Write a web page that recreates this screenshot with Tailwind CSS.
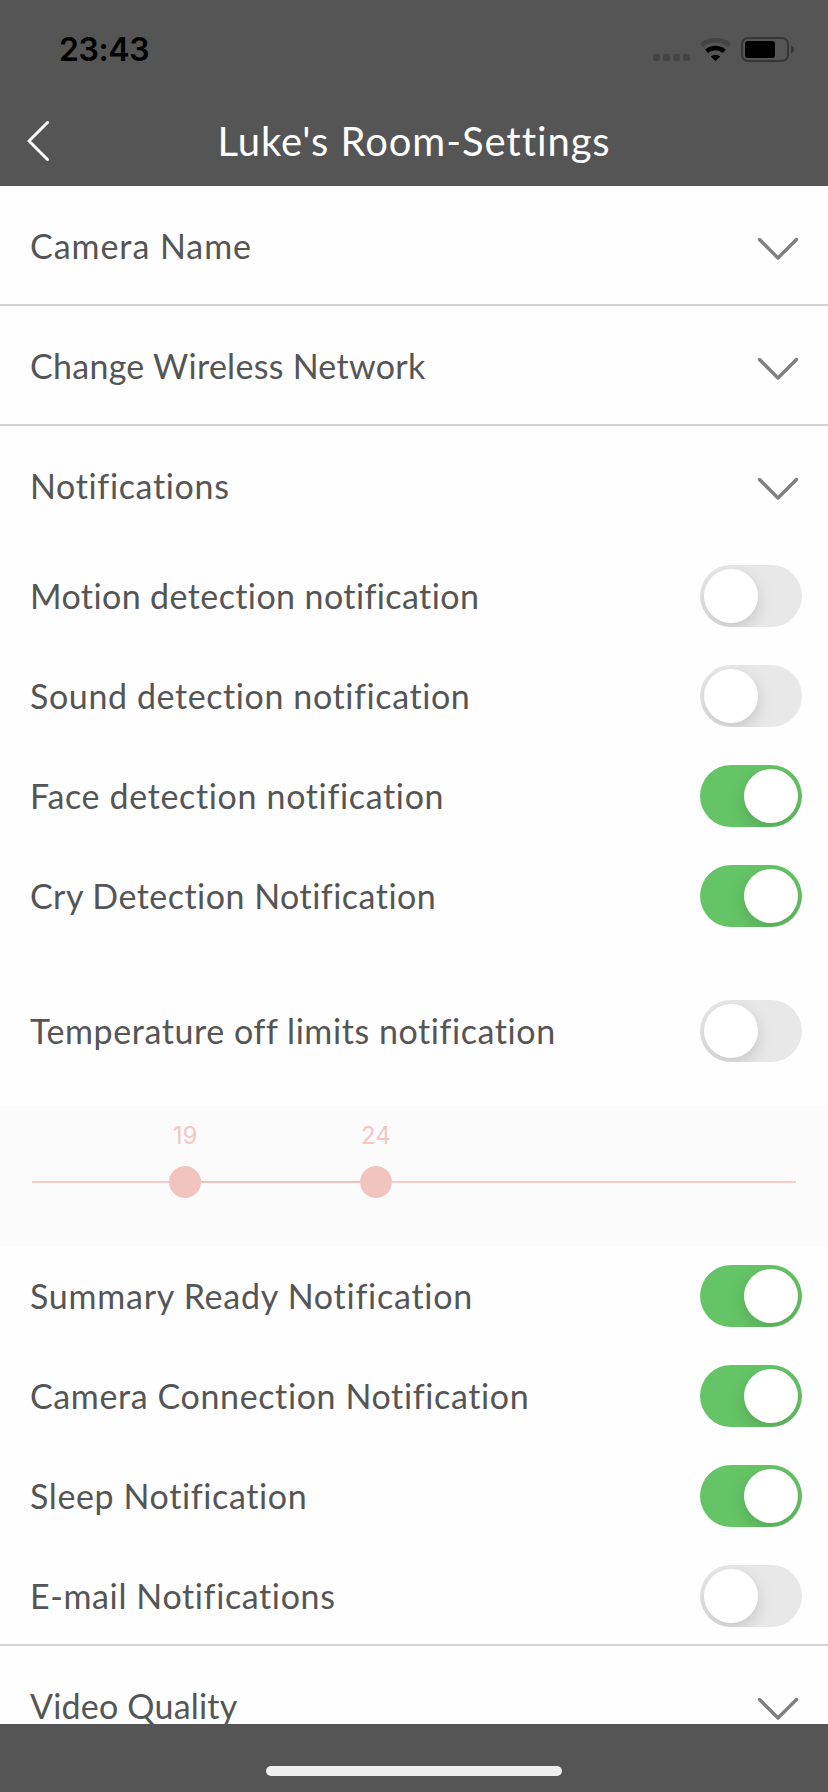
<!DOCTYPE html>
<html lang="en">

<head>
    <meta charset="UTF-8" />
    <meta name="viewport" content="width=device-width, initial-scale=1.0" />
    <title>Luke's Room-Settings</title>
    <script src="https://cdn.jsdelivr.net/npm/@tailwindcss/browser@4"></script>
</head>

<body class="bg-[#fefefe] h-[1792px] overflow-hidden flex flex-col font-['Lato',sans-serif] text-[34px] leading-[40px] text-[#555555]">

    <!-- Status bar + title -->
    <header class="bg-[#555555] h-[186px] shrink-0">
        <div class="h-[98px] flex items-center justify-between pl-[59px] pr-[33px]">
            <span class="font-['Inter',sans-serif] font-semibold text-[32px] text-black tracking-[-0.4px] pt-[2px]">23:43</span>
            <svg class="w-[142px] h-[26px] mt-[1px]" viewBox="0 0 142 26" fill="none">
                <g fill="#444444">
                    <rect x="0" y="17" width="7" height="7" rx="2" />
                    <rect x="10" y="17" width="7" height="7" rx="2" />
                    <rect x="20" y="17" width="7" height="7" rx="2" />
                    <rect x="30" y="17" width="7" height="7" rx="2" />
                </g>
                <path d="M48.400 8.200a22.600 22.600 0 0 1 28.200 0" stroke="#444444" stroke-width="4.6" />
                <path d="M53.600 14.200a14.200 14.200 0 0 1 17.800 0" stroke="black" stroke-width="4.6" />
                <path d="M62.500 24l-4.700-4.600a7.200 7.200 0 0 1 9.400 0z" fill="black" />
                <rect x="89" y="1" width="46" height="23" rx="6" stroke="#363636" stroke-width="2" />
                <rect x="92" y="4" width="30" height="17" rx="3" fill="black" />
                <path d="M138 8.500c4 1.500 4 6.500 0 8z" fill="#363636" />
            </svg>
        </div>
        <div class="h-[88px] grid grid-cols-[100px_1fr_100px] items-center text-white">
            <svg class="w-[22px] h-[40px] ml-[27px] -mt-[2px]" viewBox="0 0 22 40" fill="none" stroke="white" stroke-width="3" stroke-linecap="round" stroke-linejoin="round">
                <path d="M20.500 1.500L2 20l18.500 18.500" />
            </svg>
            <h1 class="text-[40px] leading-[48px] text-center whitespace-nowrap tracking-[0.92px] -mt-[3px]">Luke's Room-Settings</h1>
        </div>
    </header>

    <main class="flex-1 min-h-0 overflow-hidden">
        <section class="h-[120px] flex items-center justify-between pl-[30px] pr-[29px] border-b-2 border-[#d4d4d4]">
            <span class="tracking-[0.95px] pt-[2px]">Camera Name</span>
            <svg class="w-[42px] h-[24px] mt-[7px]" viewBox="0 0 42 24" fill="none" stroke="#808080" stroke-width="3.4" stroke-linecap="round" stroke-linejoin="round">
                <path d="M2.500 2.500L21 21 39.500 2.500" />
            </svg>
        </section>
        <section class="h-[120px] flex items-center justify-between pl-[30px] pr-[29px] border-b-2 border-[#d4d4d4]">
            <span class="tracking-[0.28px] pt-[2px]">Change Wireless Network</span>
            <svg class="w-[42px] h-[24px] mt-[7px]" viewBox="0 0 42 24" fill="none" stroke="#808080" stroke-width="3.4" stroke-linecap="round" stroke-linejoin="round">
                <path d="M2.500 2.500L21 21 39.500 2.500" />
            </svg>
        </section>

        <section class="h-[1220px] border-b-2 border-[#d4d4d4]">
            <div class="h-[118px] flex items-center justify-between pl-[30px] pr-[29px] mb-[2px]">
                <span class="tracking-[0.65px] pt-[2px]">Notifications</span>
                <svg class="w-[42px] h-[24px] mt-[7px]" viewBox="0 0 42 24" fill="none" stroke="#808080" stroke-width="3.4" stroke-linecap="round" stroke-linejoin="round">
                    <path d="M2.500 2.500L21 21 39.500 2.500" />
                </svg>
            </div>

            <div class="h-[100px] flex items-center justify-between pl-[30px] pr-[26px]">
                <span class="tracking-[0.4px]">Motion detection notification</span>
                <div class="w-[102px] h-[62px] rounded-full bg-[#e8e8e8] p-1 overflow-hidden flex">
                    <div class="size-[54px] rounded-full bg-white shadow-[0_6px_16px_rgba(0,0,0,0.15)]"></div>
                </div>
            </div>
            <div class="h-[100px] flex items-center justify-between pl-[30px] pr-[26px]">
                <span class="tracking-[0.6px]">Sound detection notification</span>
                <div class="w-[102px] h-[62px] rounded-full bg-[#e8e8e8] p-1 overflow-hidden flex">
                    <div class="size-[54px] rounded-full bg-white shadow-[0_6px_16px_rgba(0,0,0,0.15)]"></div>
                </div>
            </div>
            <div class="h-[100px] flex items-center justify-between pl-[30px] pr-[26px]">
                <span class="tracking-[0.65px]">Face detection notification</span>
                <div class="w-[102px] h-[62px] rounded-full bg-[#65c466] p-1 overflow-hidden flex justify-end">
                    <div class="size-[54px] rounded-full bg-white shadow-[0_6px_16px_rgba(0,0,0,0.15)]"></div>
                </div>
            </div>
            <div class="h-[100px] flex items-center justify-between pl-[30px] pr-[26px]">
                <span class="tracking-[0.48px]">Cry Detection Notification</span>
                <div class="w-[102px] h-[62px] rounded-full bg-[#65c466] p-1 overflow-hidden flex justify-end">
                    <div class="size-[54px] rounded-full bg-white shadow-[0_6px_16px_rgba(0,0,0,0.15)]"></div>
                </div>
            </div>

            <div class="h-[100px] mt-[35px] mb-[25px] flex items-center justify-between pl-[30px] pr-[26px]">
                <span class="tracking-[0.57px]">Temperature off limits notification</span>
                <div class="w-[102px] h-[62px] rounded-full bg-[#e8e8e8] p-1 overflow-hidden flex">
                    <div class="size-[54px] rounded-full bg-white shadow-[0_6px_16px_rgba(0,0,0,0.15)]"></div>
                </div>
            </div>

            <!-- Temperature range -->
            <div class="h-[140px] bg-[#fbfbfb] px-8 pt-[75px]">
                <div class="relative h-[2px] bg-[#f4cbc8]">
                    <div class="absolute left-[153px] w-[190px] h-[2px] bg-[#f2c1be]"></div>
                    <div class="absolute left-[137px] -top-[15px] size-8 rounded-full bg-[#f1c4c0]"></div>
                    <div class="absolute left-[328px] -top-[15px] size-8 rounded-full bg-[#f1c4c0]"></div>
                    <span class="absolute left-[123px] -top-[59px] w-[60px] text-center font-['Inter',sans-serif] text-[24px] leading-[28px] text-[#f4c7c3]">19</span>
                    <span class="absolute left-[314px] -top-[59px] w-[60px] text-center font-['Inter',sans-serif] text-[24px] leading-[28px] text-[#f4c7c3]">24</span>
                </div>
            </div>

            <div class="h-[100px] flex items-center justify-between pl-[30px] pr-[26px]">
                <span class="tracking-[0.75px]">Summary Ready Notification</span>
                <div class="w-[102px] h-[62px] rounded-full bg-[#65c466] p-1 overflow-hidden flex justify-end">
                    <div class="size-[54px] rounded-full bg-white shadow-[0_6px_16px_rgba(0,0,0,0.15)]"></div>
                </div>
            </div>
            <div class="h-[100px] flex items-center justify-between pl-[30px] pr-[26px]">
                <span class="tracking-[0.62px]">Camera Connection Notification</span>
                <div class="w-[102px] h-[62px] rounded-full bg-[#65c466] p-1 overflow-hidden flex justify-end">
                    <div class="size-[54px] rounded-full bg-white shadow-[0_6px_16px_rgba(0,0,0,0.15)]"></div>
                </div>
            </div>
            <div class="h-[100px] flex items-center justify-between pl-[30px] pr-[26px]">
                <span class="tracking-[0.62px]">Sleep Notification</span>
                <div class="w-[102px] h-[62px] rounded-full bg-[#65c466] p-1 overflow-hidden flex justify-end">
                    <div class="size-[54px] rounded-full bg-white shadow-[0_6px_16px_rgba(0,0,0,0.15)]"></div>
                </div>
            </div>
            <div class="h-[100px] flex items-center justify-between pl-[30px] pr-[26px]">
                <span class="tracking-[0.62px]">E-mail Notifications</span>
                <div class="w-[102px] h-[62px] rounded-full bg-[#e8e8e8] p-1 overflow-hidden flex">
                    <div class="size-[54px] rounded-full bg-white shadow-[0_6px_16px_rgba(0,0,0,0.15)]"></div>
                </div>
            </div>
        </section>

        <section class="h-[118px] flex items-center justify-between pl-[30px] pr-[29px]">
            <span class="tracking-[0.2px] pt-[2px]">Video Quality</span>
            <svg class="w-[42px] h-[24px] mt-[7px]" viewBox="0 0 42 24" fill="none" stroke="#808080" stroke-width="3.4" stroke-linecap="round" stroke-linejoin="round">
                <path d="M2.500 2.500L21 21 39.500 2.500" />
            </svg>
        </section>
    </main>

    <!-- Home indicator -->
    <footer class="bg-[#555555] h-[68px] shrink-0 flex justify-center pt-[42px]">
        <div class="w-[296px] h-[10px] rounded-full bg-[#eeeeee]"></div>
    </footer>
</body>

</html>
